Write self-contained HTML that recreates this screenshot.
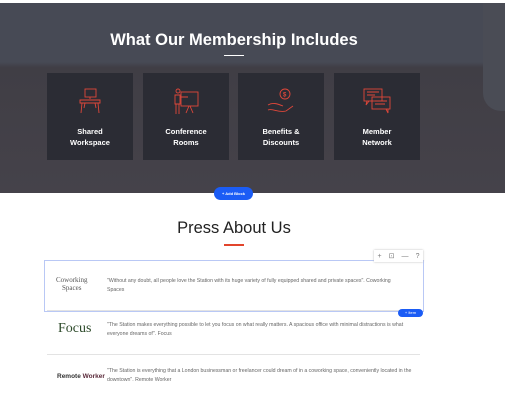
<!DOCTYPE html>
<html><head><style>
*{margin:0;padding:0;box-sizing:border-box}
body{width:505px;height:417px;background:#fff;font-family:"Liberation Sans",sans-serif;position:relative;overflow:hidden}
.hero{position:absolute;left:0;top:3px;width:505px;height:190px;background:linear-gradient(180deg,#474a55 0%,#474a55 31%,#403e45 34%,#45424a 100%)}
.hero:after{content:"";position:absolute;right:0;top:0;width:22px;height:108px;background:#4a4c55;border-bottom-left-radius:18px}
h1{position:absolute;left:0;width:468px;top:31px;text-align:center;color:#fff;font-size:16.5px;font-weight:bold}
.ul{position:absolute;height:1px;background:#fff;left:224px;width:20px;top:55px}
.card{position:absolute;top:73px;width:86px;height:87px;background:#2b2c34;color:#fff;font-size:7.5px;font-weight:bold;text-align:center;line-height:11px}
.card svg{position:absolute;left:29px;top:15px}
.card span{position:absolute;left:0;right:0;top:53px}
.add{position:absolute;left:214px;top:187px;width:39px;height:13px;border-radius:7px;background:#1b5cf5;color:#fff;font-size:4px;font-weight:bold;text-align:center;line-height:13px}
h2{position:absolute;top:219px;left:0;width:468px;text-align:center;font-size:16.5px;font-weight:normal;color:#222}
.red{position:absolute;left:224px;top:244px;width:20px;height:2px;background:#e2452c}
.box{position:absolute;left:44px;top:260px;width:380px;height:52px;border:1px solid #b9c8f5}
.tb{position:absolute;left:374px;top:250px;width:49px;height:12px;background:#fff;box-shadow:0 0 2px #bbb;font-size:7px;color:#777;display:flex;justify-content:space-around;align-items:center}
.sep{position:absolute;left:47px;width:373px;height:1px;background:#e3e3e3}
.txt{position:absolute;left:107px;font-size:5.2px;color:#666;line-height:9px;width:305px}
.item{position:absolute;left:398px;top:309px;width:25px;height:8px;border-radius:4px;background:#1b5cf5;color:#fff;font-size:4px;text-align:center;line-height:8px}
</style></head><body>
<div class="hero"></div>
<h1>What Our Membership Includes</h1>
<div class="ul"></div>
<div class="card" style="left:47px"><svg width="28" height="28" viewBox="0 0 28 28" fill="none" stroke="#e0473a" stroke-width="0.9"><rect x="9" y="1" width="11" height="8"/><path d="M14 9v2M4 12h20v3H4zM6 15l-1 10M22 15l1 10M9 15l-1 5M19 15l1 5"/></svg><span>Shared<br>Workspace</span></div>
<div class="card" style="left:143px"><svg width="28" height="28" viewBox="0 0 28 28" fill="none" stroke="#e0473a" stroke-width="0.9"><circle cx="6" cy="3" r="2"/><rect x="9" y="4" width="17" height="14"/><path d="M3 7h5v9H3zM4 16v10M7 16v10M8 9h8M17 18l-3 7M18 18l3 7"/></svg><span>Conference<br>Rooms</span></div>
<div class="card" style="left:238px"><svg width="28" height="28" viewBox="0 0 28 28" fill="none" stroke="#e0473a" stroke-width="0.9"><circle cx="18" cy="6" r="5"/><text x="16" y="8.5" font-size="6" fill="#e0473a" stroke="none">$</text><path d="M1 17c5-3 10-1 15 1M1 22c5-2 10 3 18 1l7-5"/></svg><span>Benefits &amp;<br>Discounts</span></div>
<div class="card" style="left:334px"><svg width="28" height="28" viewBox="0 0 28 28" fill="none" stroke="#e0473a" stroke-width="0.9"><rect x="1" y="1" width="18" height="12"/><rect x="9" y="9" width="18" height="12"/><path d="M4 4h12M4 7h8M12 13h12M12 16h10M4 13l-1 4 3-4M23 21l2 4v-4"/></svg><span>Member<br>Network</span></div>
<div class="add">+ Add Block</div>
<h2>Press About Us</h2>
<div class="red"></div>
<div class="box"></div>
<div class="tb"><span>+</span><span>⊡</span><span>—</span><span>?</span></div>
<div style="position:absolute;left:56px;top:276px;font-size:7px;color:#555;font-family:'Liberation Serif',serif;text-align:center;line-height:8px">Coworking<br>Spaces</div>
<div class="txt" style="top:277px;width:295px">"Without any doubt, all people love the Station with its huge variety of fully equipped shared and private spaces". Coworking Spaces</div>
<div class="sep" style="top:310px"></div>
<div class="item">+ Item</div>
<div style="position:absolute;left:58px;top:321px;font-size:14px;color:#2d4a2a;font-family:'Liberation Serif',serif">Focus</div>
<div class="txt" style="top:321px">"The Station makes everything possible to let you focus on what really matters. A spacious office with minimal distractions is what everyone dreams of". Focus</div>
<div class="sep" style="top:354px"></div>
<div style="position:absolute;left:57px;top:373px;font-size:6.5px;color:#333;font-weight:bold">Remote <span style="color:#5a2a3a">Worker</span></div>
<div class="txt" style="top:367px">"The Station is everything that a London businessman or freelancer could dream of in a coworking space, conveniently located in the downtown". Remote Worker</div>
</body></html>
